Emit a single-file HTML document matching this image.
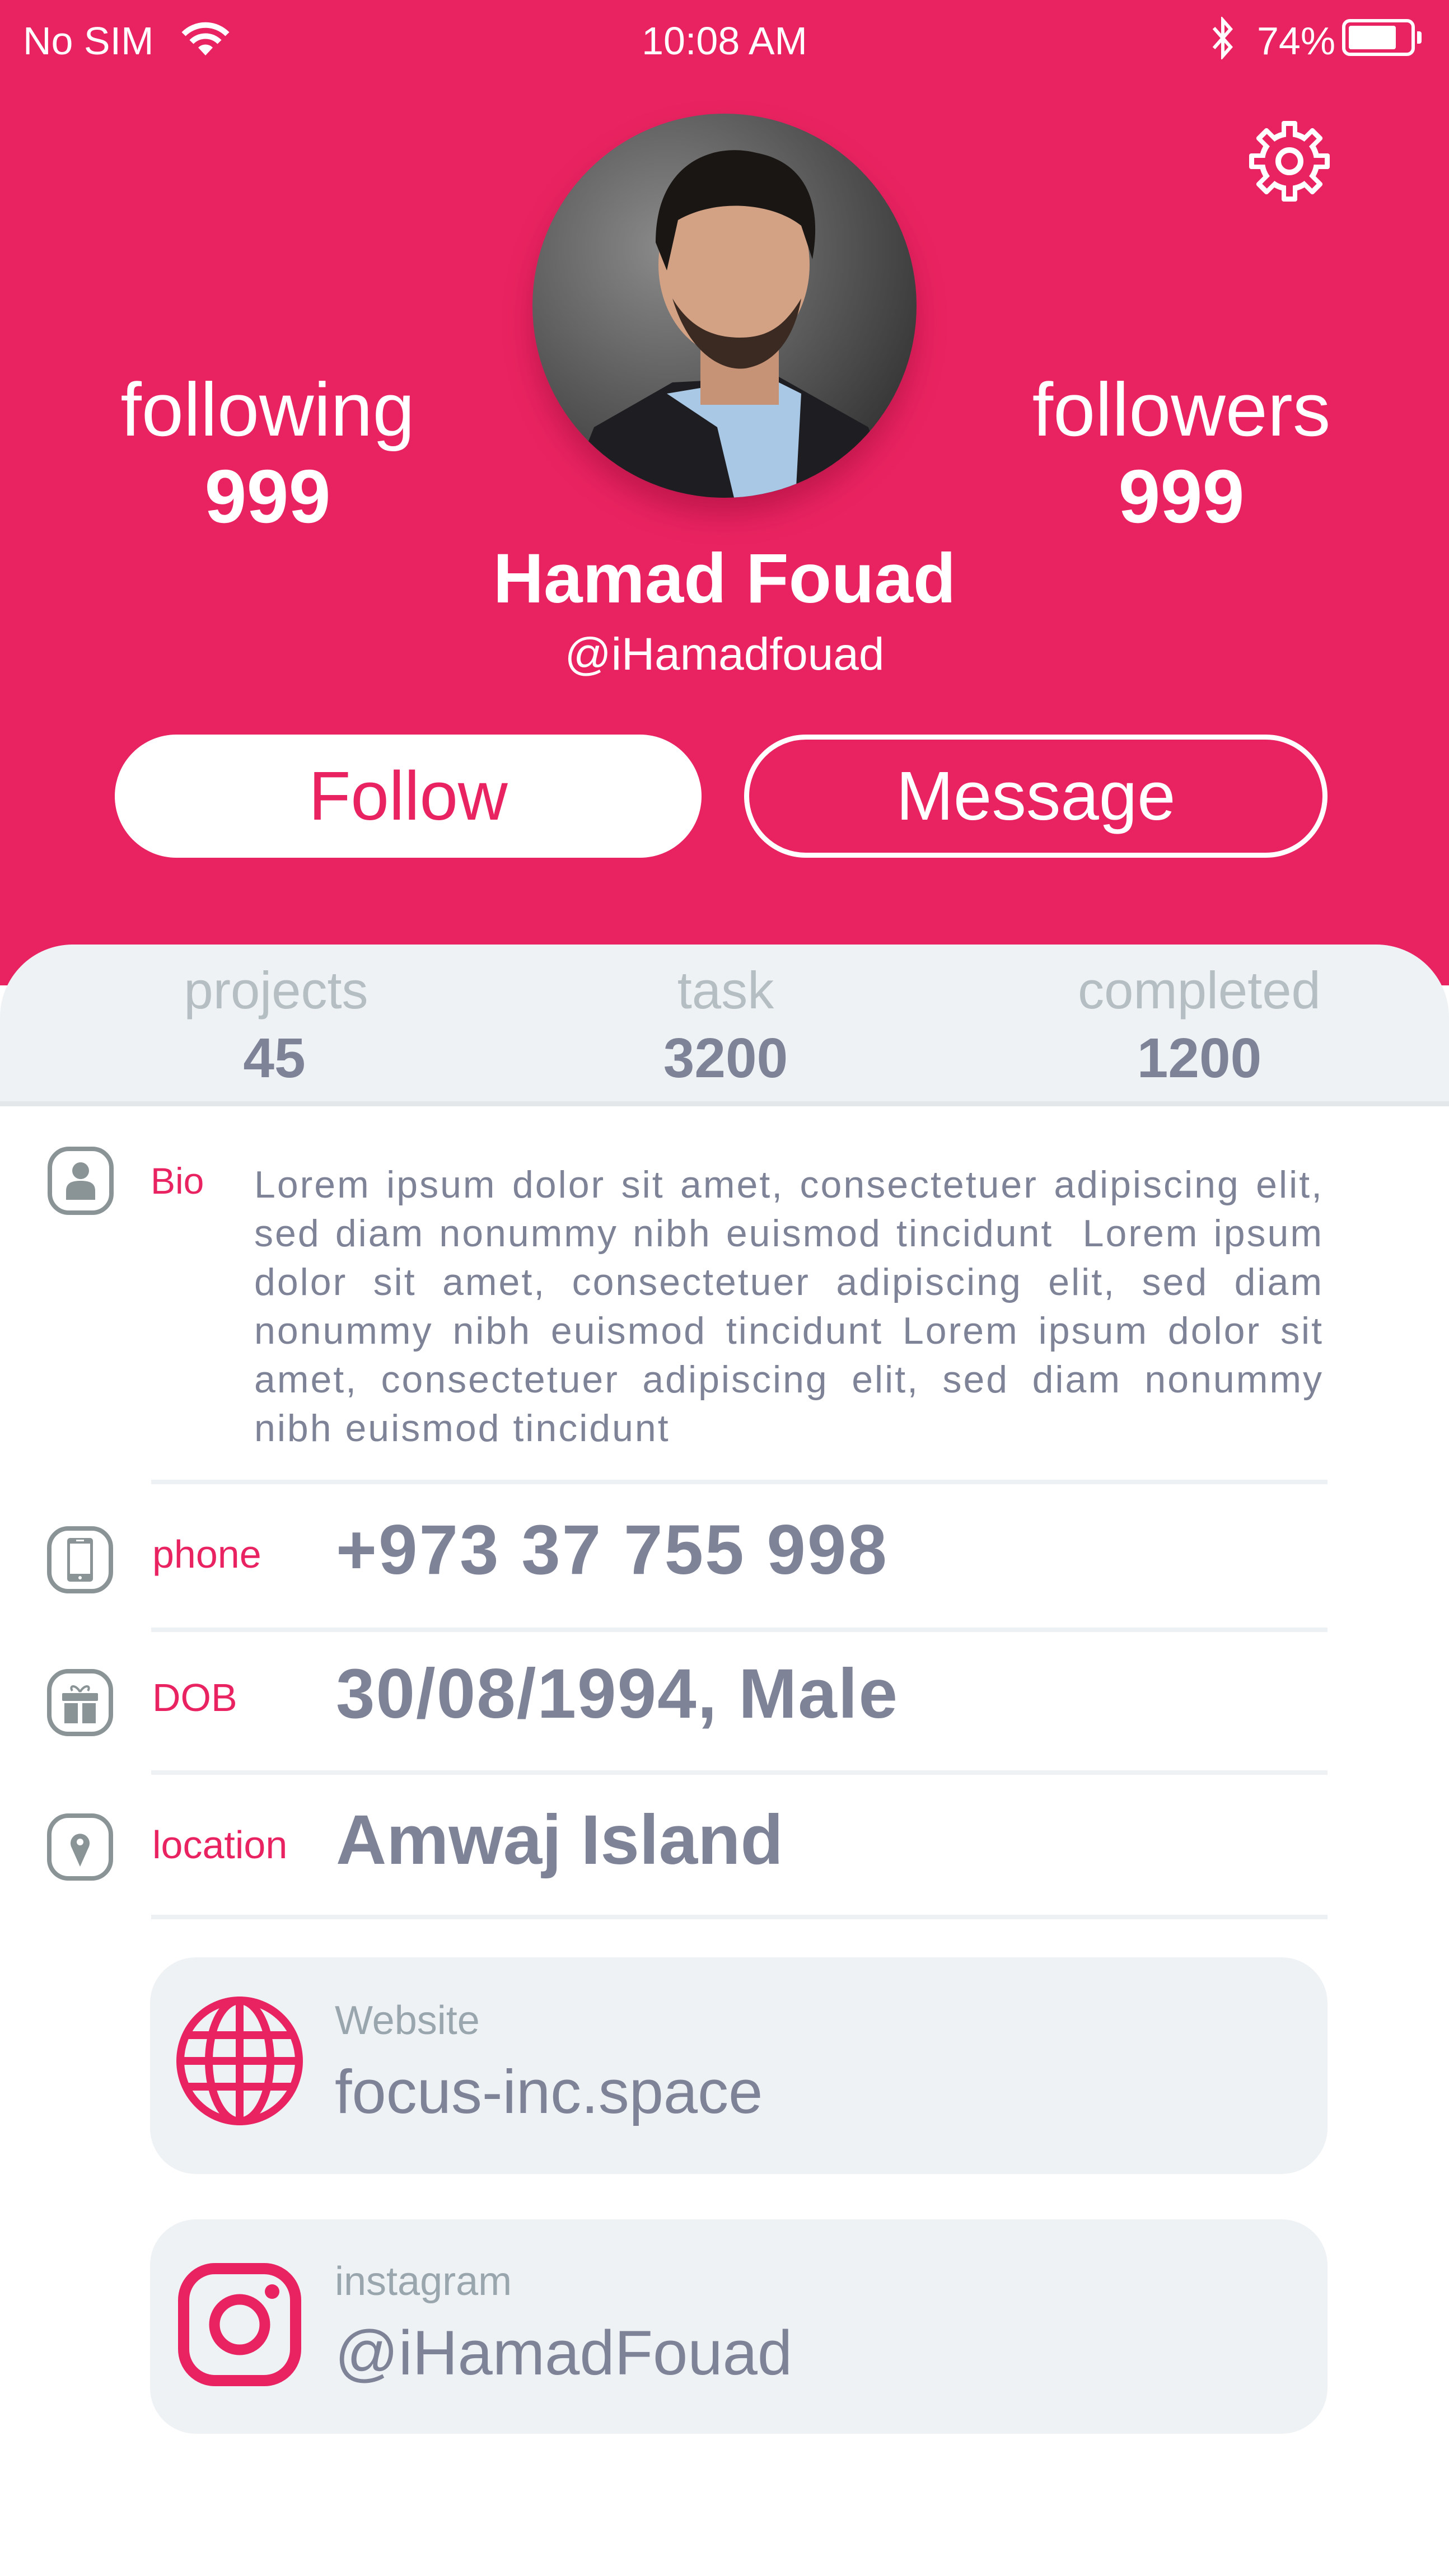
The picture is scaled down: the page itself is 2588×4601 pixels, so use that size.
<!DOCTYPE html>
<html><head><meta charset="utf-8">
<style>
*{margin:0;padding:0;box-sizing:border-box}
body{width:2588px;height:4601px;background:#fff;position:relative;overflow:hidden;font-family:"Liberation Sans",sans-serif}
.a{position:absolute;white-space:nowrap}
.hdr{position:absolute;left:0;top:0;width:2588px;height:1760px;background:#E92361}
.w{color:#fff}
.c{text-align:center}
.g{color:#7E8397}
.p{color:#E92361}
.sep{position:absolute;left:270px;width:2101px;height:8px;background:#EEF1F4}
.bio div{height:87px;line-height:87px;text-align:justify;text-align-last:justify;white-space:nowrap;letter-spacing:3px}
.bio div.l{text-align-last:left}
.card{position:absolute;left:268px;width:2103px;background:#EEF2F5;border-radius:82px}
</style></head><body>
<div class="hdr"></div>

<!-- status bar -->
<div class="a w" style="left:41px;top:38px;font-size:70px;line-height:70px">No SIM</div>
<svg class="a" style="left:322px;top:35px" width="90" height="66" viewBox="0 0 90 66">
<path d="M6 26 A55 55 0 0 1 84 26" stroke="#fff" stroke-width="10" fill="none"/>
<path d="M20 40 A35 35 0 0 1 70 40" stroke="#fff" stroke-width="10" fill="none"/>
<path d="M45 64 L32 50 A18 18 0 0 1 58 50 Z" fill="#fff"/></svg>
<div class="a w c" style="left:994px;width:600px;top:38px;font-size:70px;line-height:70px">10:08 AM</div>
<svg class="a" style="left:2162px;top:30px" width="44" height="76" viewBox="0 0 44 76">
<path d="M6 20 L36 54 L22 70 L22 6 L36 22 L6 56" stroke="#fff" stroke-width="6" fill="none"/></svg>
<div class="a w" style="left:2245px;top:38px;font-size:70px;line-height:70px">74%</div>
<div class="a" style="left:2397px;top:34px;width:130px;height:66px;border:6px solid #fff;border-radius:14px"><div style="position:absolute;left:6px;top:6px;width:84px;height:42px;background:#fff;border-radius:4px"></div></div>
<div class="a" style="left:2531px;top:56px;width:8px;height:22px;background:#fff;border-radius:0 4px 4px 0"></div>

<!-- gear -->
<svg class="a" style="left:2227px;top:212px" width="152" height="152" viewBox="0 0 152 152">
<g fill="#fff">
<circle cx="76" cy="76" r="54"/>
<rect x="62" y="4" width="28" height="40" rx="4"/>
<rect x="62" y="4" width="28" height="40" rx="4" transform="rotate(45 76 76)"/>
<rect x="62" y="4" width="28" height="40" rx="4" transform="rotate(90 76 76)"/>
<rect x="62" y="4" width="28" height="40" rx="4" transform="rotate(135 76 76)"/>
<rect x="62" y="4" width="28" height="40" rx="4" transform="rotate(180 76 76)"/>
<rect x="62" y="4" width="28" height="40" rx="4" transform="rotate(225 76 76)"/>
<rect x="62" y="4" width="28" height="40" rx="4" transform="rotate(270 76 76)"/>
<rect x="62" y="4" width="28" height="40" rx="4" transform="rotate(315 76 76)"/>
</g>
<g fill="#E92361">
<circle cx="76" cy="76" r="44"/>
<rect x="70" y="13" width="12" height="40"/>
<rect x="70" y="13" width="12" height="40" transform="rotate(45 76 76)"/>
<rect x="70" y="13" width="12" height="40" transform="rotate(90 76 76)"/>
<rect x="70" y="13" width="12" height="40" transform="rotate(135 76 76)"/>
<rect x="70" y="13" width="12" height="40" transform="rotate(180 76 76)"/>
<rect x="70" y="13" width="12" height="40" transform="rotate(225 76 76)"/>
<rect x="70" y="13" width="12" height="40" transform="rotate(270 76 76)"/>
<rect x="70" y="13" width="12" height="40" transform="rotate(315 76 76)"/>
</g>
<circle cx="76" cy="76" r="20" fill="none" stroke="#fff" stroke-width="10"/>
</svg>

<!-- avatar -->
<div class="a" style="left:951px;top:203px;width:686px;height:686px;border-radius:50%;box-shadow:0 30px 50px rgba(120,0,40,0.35);overflow:hidden">
<svg width="686" height="686" viewBox="0 0 686 686">
<defs><radialGradient id="bg" cx="0.35" cy="0.35" r="0.8"><stop offset="0" stop-color="#8a8a8a"/><stop offset="1" stop-color="#2e2e2e"/></radialGradient></defs>
<rect width="686" height="686" fill="url(#bg)"/>
<path d="M60 686 L110 560 L250 480 L440 470 L600 560 L640 686 Z" fill="#1e1e22"/>
<path d="M240 500 L330 560 L360 686 L470 686 L480 500 L420 470 Z" fill="#a9c8e6"/>
<rect x="300" y="380" width="140" height="140" fill="#c79377"/>
<ellipse cx="360" cy="270" rx="135" ry="165" fill="#d3a184"/>
<path d="M220 230 C220 90 320 50 400 70 C480 85 520 150 500 260 L480 200 C430 160 330 150 260 190 L240 280 Z" fill="#1a1614"/>
<path d="M250 330 C280 430 340 460 380 455 C440 445 470 390 480 330 C450 380 420 400 370 400 C320 400 280 380 250 330 Z" fill="#3a2a22"/>
</svg></div>

<!-- following / followers -->
<div class="a w c" style="left:178px;width:600px;top:664px;font-size:135px;line-height:135px">following</div>
<div class="a w c" style="left:178px;width:600px;top:819px;font-size:135px;line-height:135px;font-weight:bold">999</div>
<div class="a w c" style="left:1810px;width:600px;top:664px;font-size:135px;line-height:135px">followers</div>
<div class="a w c" style="left:1810px;width:600px;top:819px;font-size:135px;line-height:135px;font-weight:bold">999</div>

<div class="a w c" style="left:594px;width:1400px;top:971px;font-size:125px;line-height:125px;font-weight:bold">Hamad Fouad</div>
<div class="a w c" style="left:794px;width:1000px;top:1128px;font-size:82px;line-height:82px">@iHamadfouad</div>

<div class="a p" style="left:205px;top:1312px;width:1048px;height:220px;background:#fff;border-radius:110px;display:flex;align-items:center;justify-content:center;font-size:123px">Follow</div>
<div class="a w" style="left:1329px;top:1312px;width:1042px;height:220px;border:9px solid #fff;border-radius:110px;display:flex;align-items:center;justify-content:center;font-size:123px">Message</div>

<!-- stats -->
<div class="a" style="left:0;top:1687px;width:2588px;height:289px;background:#EEF2F5;border-radius:130px 130px 0 0;border-bottom:9px solid #E3E7E9"></div>
<div class="a c" style="left:193px;width:600px;top:1722px;font-size:94px;line-height:94px;color:#B5BEC3">projects</div>
<div class="a c" style="left:996px;width:600px;top:1722px;font-size:94px;line-height:94px;color:#B5BEC3">task</div>
<div class="a c" style="left:1842px;width:600px;top:1722px;font-size:94px;line-height:94px;color:#B5BEC3">completed</div>
<div class="a c g" style="left:190px;width:600px;top:1840px;font-size:100px;line-height:100px;font-weight:bold">45</div>
<div class="a c g" style="left:996px;width:600px;top:1840px;font-size:100px;line-height:100px;font-weight:bold">3200</div>
<div class="a c g" style="left:1842px;width:600px;top:1840px;font-size:100px;line-height:100px;font-weight:bold">1200</div>

<!-- bio -->
<svg class="a" style="left:84px;top:2047px" width="120" height="124" viewBox="0 0 120 124">
<rect x="5" y="5" width="110" height="114" rx="34" fill="none" stroke="#8A9497" stroke-width="8"/>
<circle cx="60" cy="44" r="15" fill="#8A9497"/>
<path d="M34 96 L34 80 C34 66 44 62 60 62 C76 62 86 66 86 80 L86 96 Z" fill="#8A9497"/></svg>
<div class="a p" style="left:269px;top:2076px;font-size:66px;line-height:66px">Bio</div>
<div class="a g bio" style="left:454px;top:2073px;width:1910px;font-size:68px">
<div>Lorem ipsum dolor sit amet, consectetuer adipiscing elit,</div>
<div>sed diam nonummy nibh euismod tincidunt&nbsp; Lorem ipsum</div>
<div>dolor sit amet, consectetuer adipiscing elit, sed diam</div>
<div>nonummy nibh euismod tincidunt Lorem ipsum dolor sit</div>
<div>amet, consectetuer adipiscing elit, sed diam nonummy</div>
<div class="l">nibh euismod tincidunt</div>
</div>

<div class="sep" style="top:2643px"></div>
<div class="sep" style="top:2907px"></div>
<div class="sep" style="top:3162px"></div>
<div class="sep" style="top:3420px"></div>

<!-- phone -->
<svg class="a" style="left:83px;top:2725px" width="120" height="122" viewBox="0 0 120 122">
<rect x="5" y="5" width="110" height="112" rx="34" fill="none" stroke="#8A9497" stroke-width="8"/>
<rect x="37" y="22" width="46" height="78" rx="5" fill="#8A9497"/>
<rect x="42" y="32" width="36" height="54" fill="#fff"/>
<circle cx="60" cy="93" r="3" fill="#fff"/><rect x="53" y="25" width="14" height="3" fill="#fff"/></svg>
<div class="a p" style="left:272px;top:2741px;font-size:70px;line-height:70px">phone</div>
<div class="a g" style="left:600px;top:2706px;font-size:125px;line-height:125px;font-weight:bold;letter-spacing:3px">+973 37 755 998</div>

<!-- DOB -->
<svg class="a" style="left:83px;top:2980px" width="120" height="122" viewBox="0 0 120 122">
<rect x="5" y="5" width="110" height="112" rx="34" fill="none" stroke="#8A9497" stroke-width="8"/>
<rect x="28" y="44" width="64" height="14" rx="2" fill="#8A9497"/>
<rect x="32" y="62" width="24" height="36" fill="#8A9497"/><rect x="64" y="62" width="24" height="36" fill="#8A9497"/>
<path d="M60 42 C52 28 40 30 46 40 M60 42 C68 28 80 30 74 40" stroke="#8A9497" stroke-width="4" fill="none"/></svg>
<div class="a p" style="left:272px;top:2997px;font-size:70px;line-height:70px">DOB</div>
<div class="a g" style="left:600px;top:2963px;font-size:125px;line-height:125px;font-weight:bold;letter-spacing:2px">30/08/1994, Male</div>

<!-- location -->
<svg class="a" style="left:83px;top:3238px" width="120" height="122" viewBox="0 0 120 122">
<rect x="5" y="5" width="110" height="112" rx="34" fill="none" stroke="#8A9497" stroke-width="8"/>
<path d="M60 96 L44 60 A17 17 0 1 1 76 60 Z" fill="#8A9497"/><circle cx="60" cy="52" r="6" fill="#fff"/></svg>
<div class="a p" style="left:272px;top:3260px;font-size:70px;line-height:70px">location</div>
<div class="a g" style="left:600px;top:3224px;font-size:125px;line-height:125px;font-weight:bold">Amwaj Island</div>

<!-- website card -->
<div class="card" style="top:3496px;height:387px"></div>
<svg class="a" style="left:312px;top:3565px" width="232" height="232" viewBox="0 0 232 232">
<g fill="none" stroke="#E92361" stroke-width="14">
<ellipse cx="116" cy="116" rx="106" ry="108"/>
<ellipse cx="116" cy="116" rx="55" ry="108"/>
<line x1="116" y1="8" x2="116" y2="224"/>
<line x1="10" y1="116" x2="222" y2="116"/>
<line x1="22" y1="70" x2="210" y2="70"/>
<line x1="22" y1="162" x2="210" y2="162"/>
</g></svg>
<div class="a" style="left:598px;top:3573px;font-size:72px;line-height:72px;color:#9AA6AD">Website</div>
<div class="a g" style="left:598px;top:3682px;font-size:110px;line-height:110px">focus-inc.space</div>

<!-- instagram card -->
<div class="card" style="top:3964px;height:383px"></div>
<svg class="a" style="left:318px;top:4042px" width="220" height="220" viewBox="0 0 220 220">
<rect x="10" y="10" width="200" height="200" rx="56" fill="none" stroke="#E92361" stroke-width="20"/>
<circle cx="110" cy="110" r="45" fill="none" stroke="#E92361" stroke-width="19"/>
<circle cx="168" cy="51" r="13" fill="#E92361"/></svg>
<div class="a" style="left:598px;top:4039px;font-size:72px;line-height:72px;color:#9AA6AD">instagram</div>
<div class="a g" style="left:598px;top:4147px;font-size:112px;line-height:112px">@iHamadFouad</div>
</body></html>
